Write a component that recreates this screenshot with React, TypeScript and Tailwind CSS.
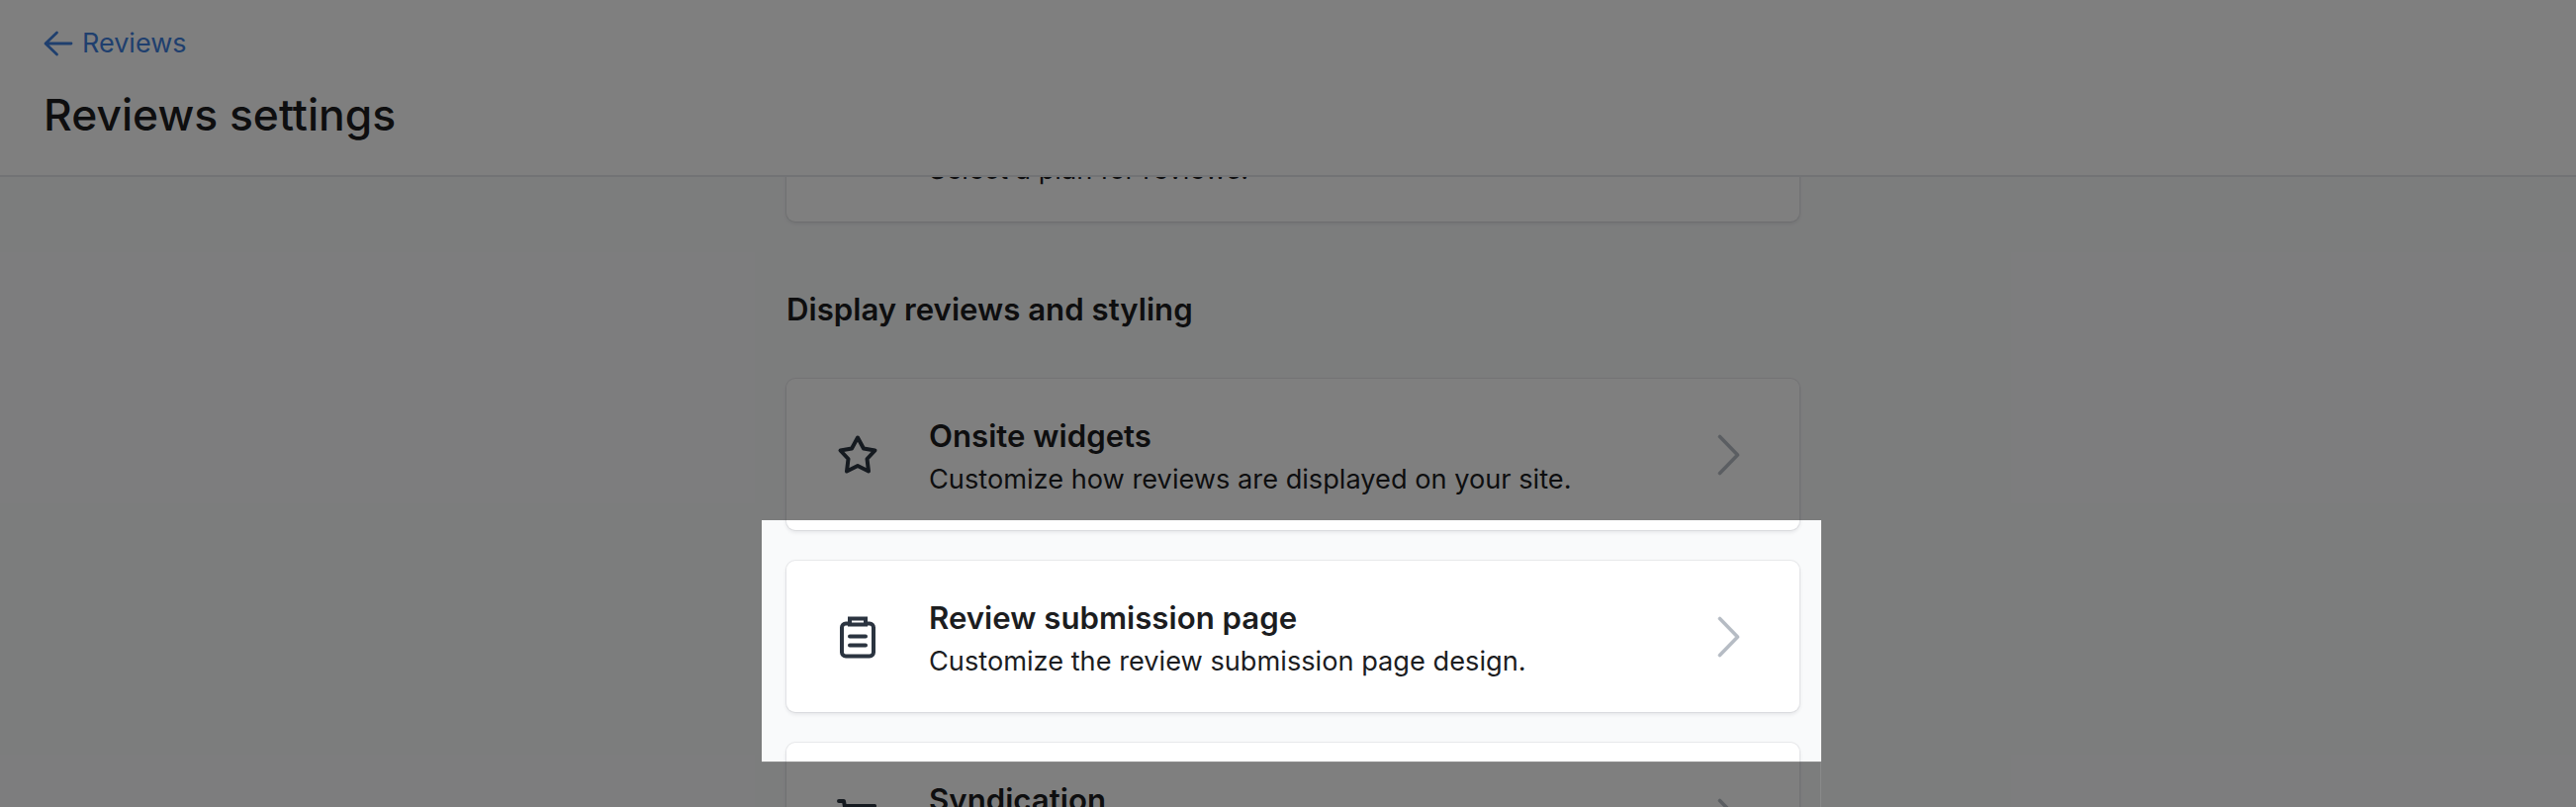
import React from 'react';

const ChevronIcon = () => (
  <svg width="24" height="42" viewBox="0 0 24 42" fill="none" stroke="currentColor" strokeWidth="3.6" strokeLinecap="round" strokeLinejoin="round">
    <path d="M2.500 2.500L20.500 21L2.500 39.500" />
  </svg>
);

const StarIcon = () => (
  <svg width="44" height="44" viewBox="0 0 44 44" fill="none" stroke="currentColor" strokeWidth="4" strokeLinejoin="round">
    <path d="M22 4.500L28 15.500L39.500 17.500L31.500 26L33 38.500L22 33L11 38.500L12.500 26L4.500 17.500L16 15.500Z" />
  </svg>
);

const ClipboardIcon = () => (
  <svg width="44" height="44" viewBox="0 0 44 44" fill="none" stroke="currentColor" strokeWidth="4" strokeLinecap="round">
    <path d="M12 8.500H10a4 4 0 0 0-4 4V37.500a4 4 0 0 0 4 4h24a4 4 0 0 0 4-4V12.500a4 4 0 0 0-4-4h-2" />
    <path strokeLinecap="butt" d="M14 3.500H30V9.500H14Z" />
    <path d="M14 21.500H30M14 30.500H30" />
  </svg>
);

const CartIcon = () => (
  <svg width="44" height="44" viewBox="0 0 44 44" fill="none" stroke="currentColor" strokeWidth="4" strokeLinecap="round" strokeLinejoin="round">
    <path d="M3 4H8L12 28H35L39 9H9" />
  </svg>
);

type SettingCardProps = {
  icon: React.ReactNode;
  title: string;
  text: string;
};

const SettingCard = ({ icon, title, text }: SettingCardProps) => (
  <div className="flex h-[153px] items-center rounded-[9px] bg-white pl-[50px] pr-[59px] shadow-[0_0_0_1px_rgba(17,24,39,0.06),0_2px_4px_rgba(17,24,39,0.1)]">
    <div className="flex w-[94px] shrink-0 text-[#2b3440]">{icon}</div>
    <div className="flex-1 pt-[7px]">
      <div className="text-[31.2px] leading-[43px] font-semibold text-[#1c1d1f]">{title}</div>
      <div className="text-[27.2px] leading-[44px] text-[#1c1d1f]">{text}</div>
    </div>
    <div className="text-[#b6bcc4]">
      <ChevronIcon />
    </div>
  </div>
);

export default function App() {
  return (
    <div className="relative flex h-[816px] flex-col overflow-hidden bg-[#f9fafb] font-['Inter',sans-serif]">
      <header className="h-[179px] shrink-0 border-b-2 border-[#e5e7eb] bg-white pl-[44px] pt-[26px]">
        <div className="flex h-[36px] items-center gap-[9px] text-[#3f7fdc]">
          <svg width="30" height="26" viewBox="0 0 30 26" fill="none" stroke="currentColor" strokeWidth="2.8" strokeLinecap="round" strokeLinejoin="round">
            <path d="M28 13H3M13.500 2L2 13L13.500 24" />
          </svg>
          <span className="text-[27px]">Reviews</span>
        </div>
        <h1 className="mt-[26px] text-[44.400px] leading-[56px] font-medium text-[#1c1d1f]">Reviews settings</h1>
      </header>

      <main className="min-h-0 flex-1 overflow-hidden">
        <div className="-mt-[60px] ml-[795px] w-[1024px]">
          <div className="flex h-[105px] items-center rounded-[9px] bg-white pl-[144px] shadow-[0_0_0_1px_rgba(17,24,39,0.06),0_2px_4px_rgba(17,24,39,0.1)]">
            <span className="text-[27.2px] leading-[40px] text-[#1c1d1f]">Select a plan for reviews.</span>
          </div>
          <h2 className="mt-[69px] text-[31.200px] leading-[40px] font-semibold text-[#1c1d1f]">Display reviews and styling</h2>
          <div className="mt-[50px] flex flex-col gap-[31px]">
            <SettingCard icon={<StarIcon />} title="Onsite widgets" text="Customize how reviews are displayed on your site." />
            <SettingCard icon={<ClipboardIcon />} title="Review submission page" text="Customize the review submission page design." />
            <SettingCard icon={<CartIcon />} title="Syndication" text="Share reviews with retailers." />
          </div>
        </div>
      </main>

      {/* spotlight: four dim panels around the highlighted row */}
      <div className="absolute inset-x-0 top-0 h-[526px] bg-black/50" />
      <div className="absolute bottom-0 left-0 top-[526px] w-[770px] bg-black/50" />
      <div className="absolute bottom-0 right-0 left-[1841px] top-[526px] bg-black/50" />
      <div className="absolute bottom-0 left-[770px] top-[770px] w-[1071px] border-r border-t border-white/10 bg-black/50" />
    </div>
  );
}
